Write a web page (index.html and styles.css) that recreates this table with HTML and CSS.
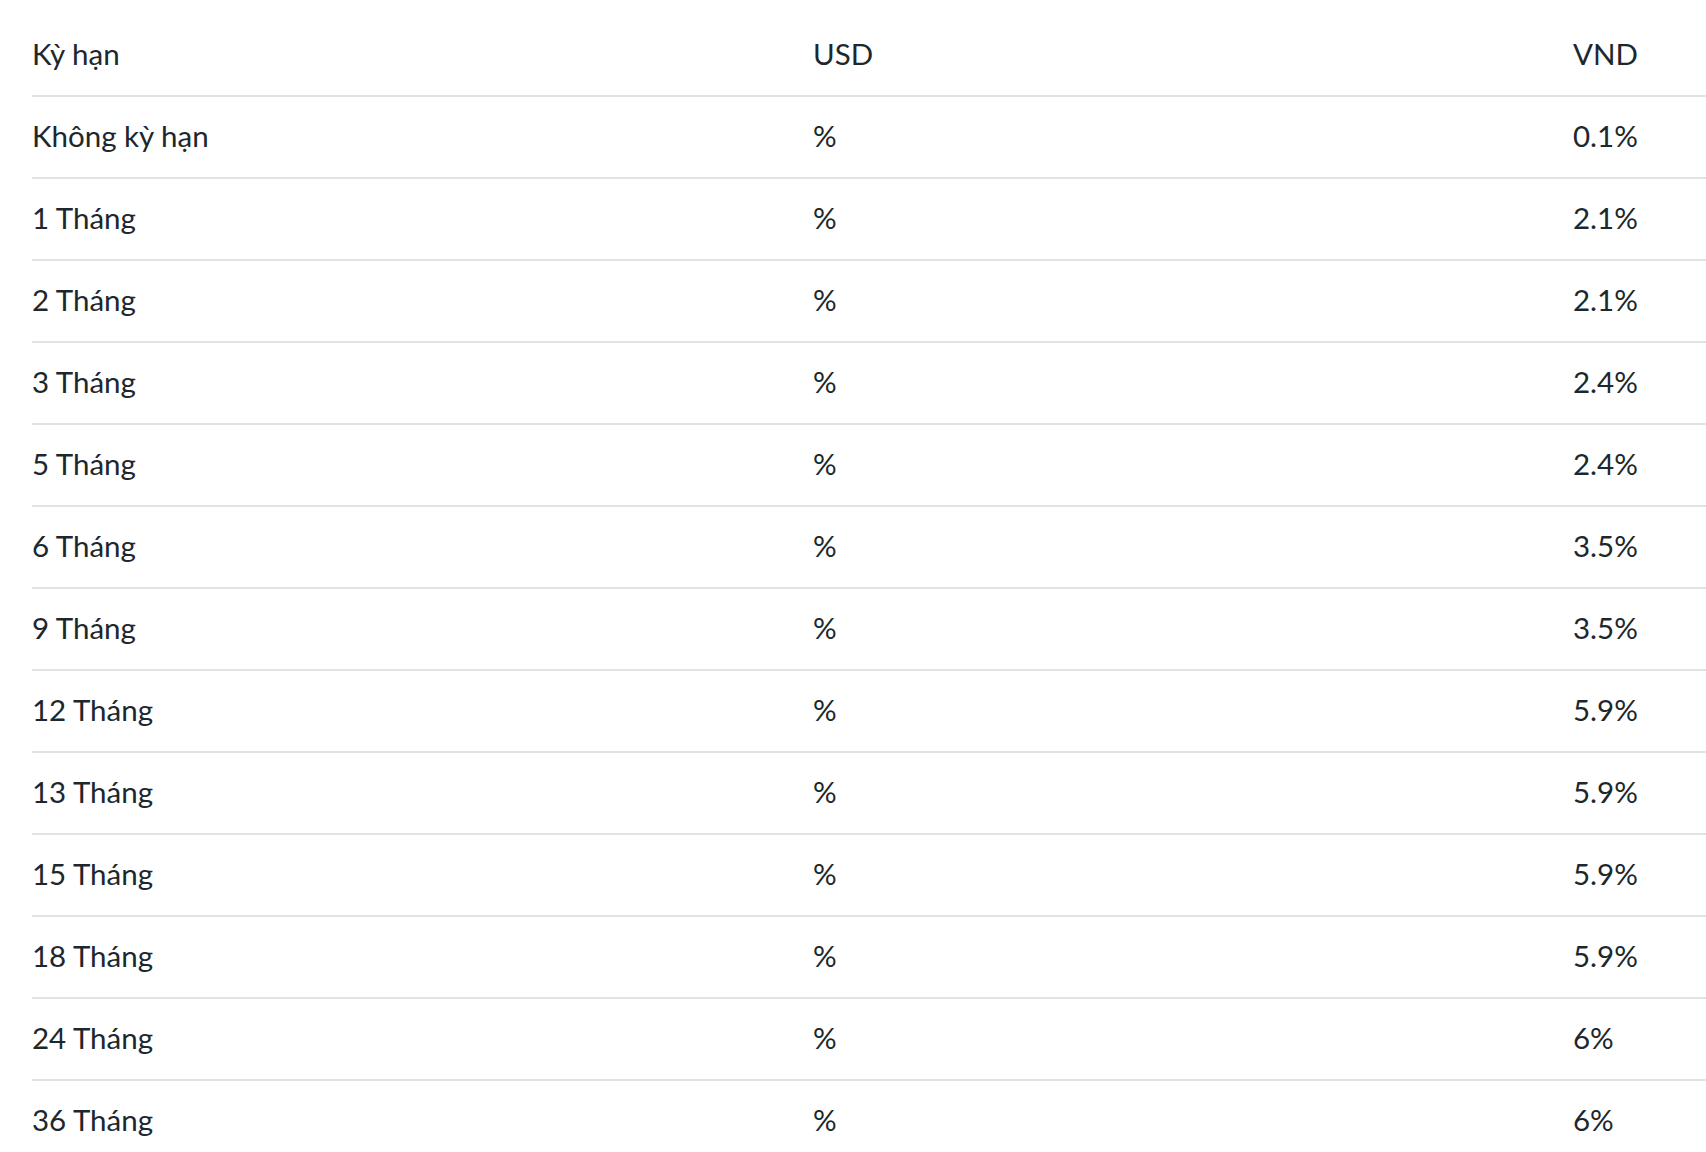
FILE: index.html
```html
<!DOCTYPE html>
<html lang="vi">
<head>
    <meta charset="UTF-8">
    <meta name="viewport" content="width=device-width, initial-scale=1.0">
    <title>Lãi suất tiền gửi</title>
    <link rel="stylesheet" href="styles.css">
</head>
<body>

<div class="rates">
    <div class="row head">
        <div>Kỳ hạn</div>
        <div>USD</div>
        <div>VND</div>
    </div>
    <div class="row"><div>Không kỳ hạn</div><div>%</div><div>0.1%</div></div>
    <div class="row"><div>1 Tháng</div><div>%</div><div>2.1%</div></div>
    <div class="row"><div>2 Tháng</div><div>%</div><div>2.1%</div></div>
    <div class="row"><div>3 Tháng</div><div>%</div><div>2.4%</div></div>
    <div class="row"><div>5 Tháng</div><div>%</div><div>2.4%</div></div>
    <div class="row"><div>6 Tháng</div><div>%</div><div>3.5%</div></div>
    <div class="row"><div>9 Tháng</div><div>%</div><div>3.5%</div></div>
    <div class="row"><div>12 Tháng</div><div>%</div><div>5.9%</div></div>
    <div class="row"><div>13 Tháng</div><div>%</div><div>5.9%</div></div>
    <div class="row"><div>15 Tháng</div><div>%</div><div>5.9%</div></div>
    <div class="row"><div>18 Tháng</div><div>%</div><div>5.9%</div></div>
    <div class="row"><div>24 Tháng</div><div>%</div><div>6%</div></div>
    <div class="row"><div>36 Tháng</div><div>%</div><div>6%</div></div>
</div>

</body>
</html>
```

FILE: styles.css
```css
body {
    margin: 0;
    background-color: #fff;
    font-family: Lato, "Noto Sans", sans-serif;
    color: #1c282d;
    overflow: hidden;
}
.rates {
    padding-left: 32px;
}
.row {
    display: grid;
    grid-template-columns: 781px 760px 1fr;
    align-items: center;
    height: 80px;
    padding-bottom: 4px;
    box-sizing: border-box;
    height: 82px;
    border-bottom: 2px solid #e2e2e2;
    font-size: 29.5px;
}
.head {
    height: 97px;
    padding-top: 12px;
    padding-bottom: 0;
}
```
